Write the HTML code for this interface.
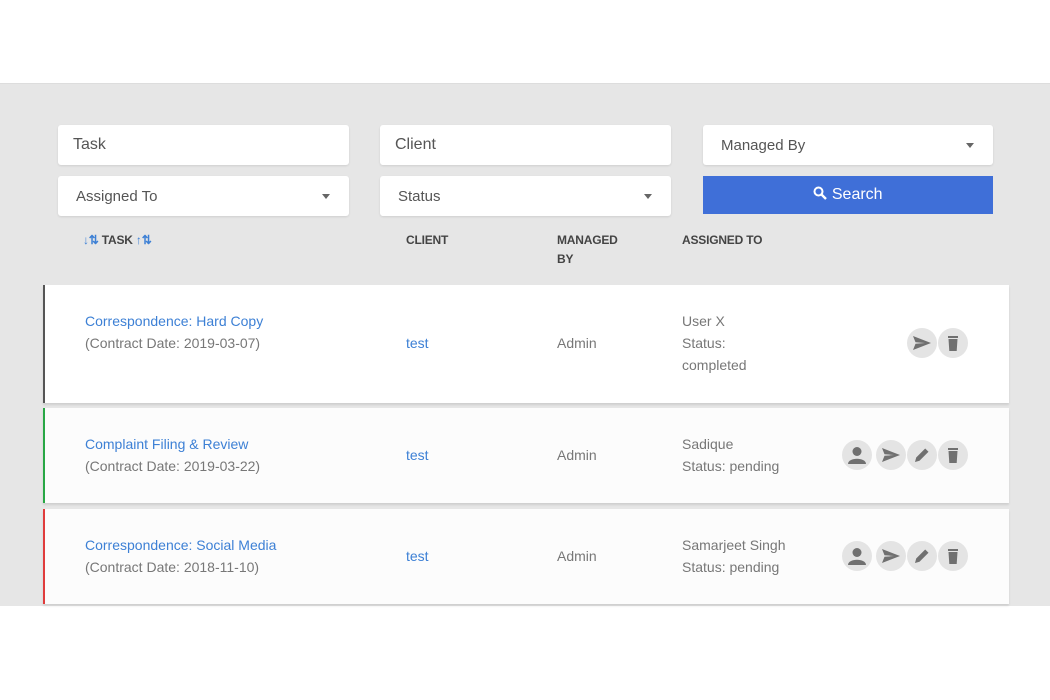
<!DOCTYPE html>
<html><head><style>
*{margin:0;padding:0;box-sizing:border-box}
body{width:1050px;height:700px;background:#fff;font-family:"Liberation Sans",sans-serif;position:relative;overflow:hidden}
.bg{position:absolute;left:0;top:83px;width:1050px;height:523px;background:#e6e6e6;border-top:1px solid #ddd}
.inp{position:absolute;height:40px;background:#fff;border-radius:3px;box-shadow:0 1px 2px rgba(0,0,0,.1);font-size:16px;color:#555;padding:11px 15px}
.sel{font-size:15px;padding:12px 18px}
.sel:after{content:"";position:absolute;right:19px;top:18px;border:4.5px solid transparent;border-top:5px solid #666}
.btn{position:absolute;left:703px;top:176px;width:290px;height:38px;background:#3f6fd8;color:#fff;font-size:16px;text-align:center;line-height:38px}
.h{position:absolute;font-size:12px;color:#444;line-height:19px;font-weight:bold;letter-spacing:-.2px}
.card{position:absolute;left:43px;width:966px;background:#fff;border-left:2px solid #555;box-shadow:0 2px 2px rgba(0,0,0,.1)}
.t{position:absolute;font-size:14px;line-height:22px;color:#777}
.lk{color:#3d80d5}
.ic{position:absolute;width:30px;height:30px;border-radius:50%;background:#e4e4e4}
.ic svg{position:absolute;left:5px;top:5px}
</style></head><body>
<div class="bg"></div>
<div class="inp" style="left:58px;top:125px;width:291px">Task</div>
<div class="inp" style="left:380px;top:125px;width:291px">Client</div>
<div class="inp sel" style="left:703px;top:125px;width:290px">Managed By</div>
<div class="inp sel" style="left:58px;top:176px;width:291px">Assigned To</div>
<div class="inp sel" style="left:380px;top:176px;width:291px">Status</div>
<div class="btn"><svg width="14" height="14" viewBox="0 0 14 14" style="vertical-align:-1px"><circle cx="5.5" cy="5.5" r="4" fill="none" stroke="#fff" stroke-width="2"/><path d="M8.5 8.5L13 13" stroke="#fff" stroke-width="2.4"/></svg> Search</div>
<div class="h" style="left:83px;top:231px"><span style="color:#3d80d5">↓⇅</span> TASK <span style="color:#3d80d5">↑⇅</span></div>
<div class="h" style="left:406px;top:231px">CLIENT</div>
<div class="h" style="left:557px;top:231px">MANAGED<br>BY</div>
<div class="h" style="left:682px;top:231px">ASSIGNED TO</div>

<div class="card" style="top:285px;height:118px;border-left-color:#555"></div>
<div class="card" style="top:408px;height:95px;border-left-color:#28a745;background:#fcfcfc"></div>
<div class="card" style="top:509px;height:95px;border-left-color:#e03c3c;background:#fcfcfc"></div>

<div class="t" style="left:85px;top:310px"><span class="lk">Correspondence: Hard Copy</span><br>(Contract Date: 2019-03-07)</div>
<div class="t lk" style="left:406px;top:332px">test</div>
<div class="t" style="left:557px;top:332px">Admin</div>
<div class="t" style="left:682px;top:310px">User X<br>Status:<br>completed</div>

<div class="t" style="left:85px;top:433px"><span class="lk">Complaint Filing &amp; Review</span><br>(Contract Date: 2019-03-22)</div>
<div class="t lk" style="left:406px;top:444px">test</div>
<div class="t" style="left:557px;top:444px">Admin</div>
<div class="t" style="left:682px;top:433px">Sadique<br>Status: pending</div>

<div class="t" style="left:85px;top:534px"><span class="lk">Correspondence: Social Media</span><br>(Contract Date: 2018-11-10)</div>
<div class="t lk" style="left:406px;top:545px">test</div>
<div class="t" style="left:557px;top:545px">Admin</div>
<div class="t" style="left:682px;top:534px">Samarjeet Singh<br>Status: pending</div>

<svg width="0" height="0" style="position:absolute"><defs>
<g id="send"><path d="M1 3 L19 10 L1 17 L3.5 10.8 L13 10 L3.5 9.2 Z" fill="#707070"/></g>
<g id="trash"><path d="M5 3h10v2H5zM5.5 6h9l-.8 12H6.3z" fill="#707070"/></g>
<g id="edit"><path d="M3 17l1.2-4.5 9-9 3.3 3.3-9 9z" fill="#707070"/></g>
<g id="user"><circle cx="10" cy="6.5" r="4.5" fill="#707070"/><path d="M1 19c0-7 18-7 18 0z" fill="#707070"/></g>
</defs></svg>

<div class="ic" style="left:907px;top:328px"><svg width="20" height="20"><use href="#send"/></svg></div>
<div class="ic" style="left:938px;top:328px"><svg width="20" height="20"><use href="#trash"/></svg></div>

<div class="ic" style="left:842px;top:440px"><svg width="20" height="20"><use href="#user"/></svg></div>
<div class="ic" style="left:876px;top:440px"><svg width="20" height="20"><use href="#send"/></svg></div>
<div class="ic" style="left:907px;top:440px"><svg width="20" height="20"><use href="#edit"/></svg></div>
<div class="ic" style="left:938px;top:440px"><svg width="20" height="20"><use href="#trash"/></svg></div>

<div class="ic" style="left:842px;top:541px"><svg width="20" height="20"><use href="#user"/></svg></div>
<div class="ic" style="left:876px;top:541px"><svg width="20" height="20"><use href="#send"/></svg></div>
<div class="ic" style="left:907px;top:541px"><svg width="20" height="20"><use href="#edit"/></svg></div>
<div class="ic" style="left:938px;top:541px"><svg width="20" height="20"><use href="#trash"/></svg></div>
</body></html>
